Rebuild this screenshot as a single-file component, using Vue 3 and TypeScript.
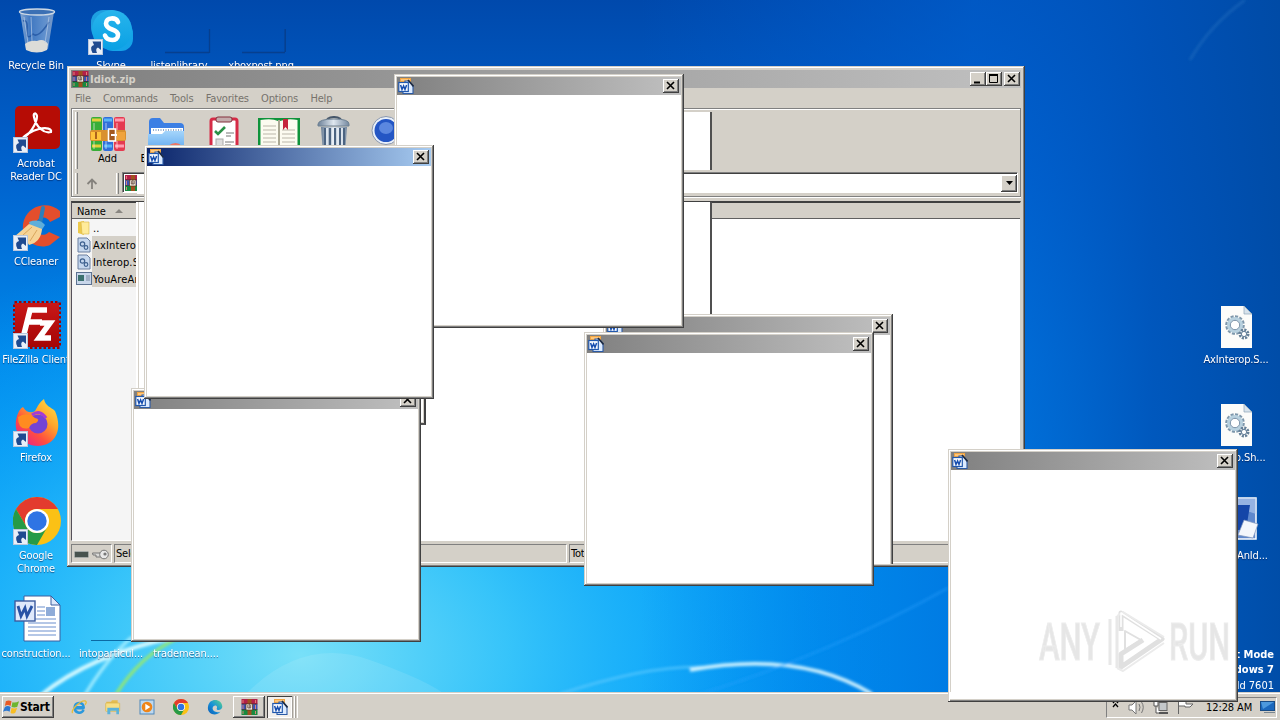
<script setup lang="ts">
interface DesktopItem { id: string; icon: string; label: string; x: number; y: number; shortcut?: boolean }
interface Popup { id: string; x: number; y: number; active?: boolean; cut?: boolean }

const items: DesktopItem[] = [
  { id: 'bin', icon: 'bin', label: 'Recycle Bin', x: -1, y: 7 },
  { id: 'skype', icon: 'skype', label: 'Skype', x: 74, y: 7, shortcut: true },
  { id: 'listen', icon: 'ghostwide', label: 'listenlibrary', x: 142, y: 7 },
  { id: 'xbox', icon: 'ghost', label: 'xboxpost.png', x: 224, y: 7 },
  { id: 'acrobat', icon: 'acrobat', label: 'Acrobat Reader DC', x: -1, y: 105, shortcut: true },
  { id: 'ccleaner', icon: 'ccleaner', label: 'CCleaner', x: -1, y: 203, shortcut: true },
  { id: 'filezilla', icon: 'filezilla', label: 'FileZilla Client', x: -1, y: 301, shortcut: true },
  { id: 'firefox', icon: 'firefox', label: 'Firefox', x: -1, y: 399, shortcut: true },
  { id: 'chrome', icon: 'chrome', label: 'Google Chrome', x: -1, y: 497, shortcut: true },
  { id: 'construction', icon: 'worddoc', label: 'construction...', x: -1, y: 595 },
  { id: 'into', icon: 'ghostline', label: 'intoparticul...', x: 74, y: 595 },
  { id: 'trade', icon: 'none', label: 'trademean....', x: 149, y: 595 },
  { id: 'axinterop', icon: 'dll', label: 'AxInterop.S...', x: 1199, y: 301 },
  { id: 'interop', icon: 'dll', label: 'Interop.Sh...', x: 1199, y: 399 },
  { id: 'idiot', icon: 'app', label: 'YouAreAnId...', x: 1199, y: 497 },
]

const menus = ['File', 'Commands', 'Tools', 'Favorites', 'Options', 'Help']

const tools = [
  { icon: 'books', label: 'Add', w: 57 },
  { icon: 'folder', label: 'Extract To', w: 58 },
  { icon: 'clip', label: 'Test', w: 57 },
  { icon: 'book', label: 'View', w: 53 },
  { icon: 'trash', label: 'Delete', w: 57 },
  { icon: 'disc', label: 'Find', w: 49 },
]

const files = [
  { icon: 'fold16', name: '..', sel: false },
  { icon: 'dll16', name: 'AxInterop.S', sel: true },
  { icon: 'dll16', name: 'Interop.Sh', sel: true },
  { icon: 'exe16', name: 'YouAreAnId', sel: true },
]

const popups: Popup[] = [
  { id: 'd', x: 603, y: 314, cut: true },
  { id: 'e', x: 584, y: 332 },
  { id: 'b', x: 394, y: 74 },
  { id: 'c', x: 131, y: 388 },
  { id: 'a', x: 144, y: 145, active: true },
  { id: 'f', x: 948, y: 449 },
]

const quick = ['ie', 'explorer', 'player', 'chrome', 'edge']
</script>

<template>
  <div class="desktop">
    <svg class="defs" width="0" height="0">
      <defs>
        <linearGradient id="gBin" x1="0" x2="1"><stop offset="0" stop-color="#9fb9d8" /><stop offset=".3" stop-color="#4a7fc4" /><stop offset=".7" stop-color="#6f9bd2" /><stop offset="1" stop-color="#8aa6cc" /></linearGradient>
        <linearGradient id="gSky" y1="0" y2="1" x2="0"><stop offset="0" stop-color="#28b4ec" /><stop offset="1" stop-color="#0aa0e4" /></linearGradient>
        <linearGradient id="gFx" x1="1" y1="0" x2=".2" y2="1"><stop offset="0" stop-color="#ffe94a" /><stop offset=".4" stop-color="#ffa62b" /><stop offset=".7" stop-color="#ff4f3e" /><stop offset="1" stop-color="#e8208a" /></linearGradient>
        <linearGradient id="gFold" y1="0" y2="1" x2="0"><stop offset="0" stop-color="#a5d5fb" /><stop offset="1" stop-color="#5aa5ee" /></linearGradient>
        <linearGradient id="gTrash" x1="0" x2="1"><stop offset="0" stop-color="#6d8199" /><stop offset=".5" stop-color="#dfe7ef" /><stop offset="1" stop-color="#7488a0" /></linearGradient>
        <linearGradient id="gFz" y1="0" y2="1" x2="0"><stop offset="0" stop-color="#c81818" /><stop offset="1" stop-color="#a50505" /></linearGradient>
        <linearGradient id="gEdge" x1="0" y1="1" x2="1" y2="0"><stop offset="0" stop-color="#0b5cb8" /><stop offset=".5" stop-color="#1793d8" /><stop offset="1" stop-color="#5fd68a" /></linearGradient>
      </defs>

      <symbol id="i-bin" viewBox="0 0 48 48">
        <path d="M7 5 L13 42 Q24 48 35 42 L41 5Z" fill="url(#gBin)" opacity=".85" />
        <path d="M12 37 Q17 33 24 34 Q31 31 35 37 L34 43 Q24 48 13 43Z" fill="#dcdcd8" />
        <path d="M10 14 Q15 12 14 23 T20 27 Q25 32 36 15" fill="none" stroke="#1b4f9c" stroke-width="1.5" opacity=".7" />
        <path d="M11 10 15 36M18 10 19 34M36 10 32 36" stroke="#b8cde8" stroke-width="1" opacity=".7" />
        <ellipse cx="24" cy="5" rx="17.5" ry="3" fill="#3c70b4" stroke="#ccd8e4" stroke-width="1.4" />
      </symbol>
      <symbol id="i-skype" viewBox="0 0 48 48">
        <rect x="3" y="3" width="32" height="30" rx="12" fill="#1e9fe0" />
        <rect x="13" y="14" width="32" height="30" rx="12" fill="#14a4e8" />
        <circle cx="24" cy="23" r="20" fill="url(#gSky)" />
        <path d="M30 15 C28 10 18 10 18 16.500 C18 24 30 21 30 28 C30 35 19 34 17 28.500" fill="none" stroke="#fff" stroke-width="4.6" stroke-linecap="round" />
      </symbol>
      <symbol id="i-acrobat" viewBox="0 0 48 48">
        <rect x="2" y="1" width="45" height="43" rx="5" fill="#b60c05" />
        <path d="M10 33 C16 30 24 19 24 11 C23 7 20 8 21 12 C23 22 31 29 38 27 C39 24 34 22 26 24 C18 26 11 31 10 33Z" fill="none" stroke="#fff" stroke-width="2.2" />
      </symbol>
      <symbol id="i-ccleaner" viewBox="0 0 48 48">
        <path d="M47 8 C36 -2 17 1 11 17 C5 35 23 48 37 42 L47 34 L36 29 C30 35 21 31 22 22 C24 13 34 12 37 19 L47 14Z" fill="#e44e2c" />
        <path d="M30 5 27 20" stroke="#2c7fba" stroke-width="4" stroke-linecap="round" />
        <path d="M16 19 Q26 15 32 22 L28 28 18 26Z" fill="#5eaedb" />
        <path d="M16 21 Q7 29 2 33 Q13 35 16 42 Q28 39 29 26Z" fill="#f6d396" />
        <path d="M10 32 19 24M17 38 24 27" stroke="#d9a65c" />
      </symbol>
      <symbol id="i-filezilla" viewBox="0 0 48 48">
        <rect x="1.5" y="1.5" width="45" height="45" fill="none" stroke="#a00000" stroke-width="3" stroke-dasharray="2.5 2" />
        <rect x="2" y="2" width="44" height="44" fill="url(#gFz)" />
        <path d="M11 33 17 9H34M14 21H29M27 22H37L26 37H38" fill="none" stroke="#fff" stroke-width="5.5" />
      </symbol>
      <symbol id="i-firefox" viewBox="0 0 48 48">
        <path d="M4 17 C6 11 8 9 10 8 C13 13 17 14 20 13 C24 12 23 6 31 0 C32 7 38 8 42 12 C51 33 40 47 25 47 C9 47 -1 32 4 17Z" fill="url(#gFx)" />
        <circle cx="25" cy="25" r="9.5" fill="#7443d4" />
        <path d="M5 18Q14 12 22 19Q28 20 23 24Q18 24 16 29Q5 32 5 18" fill="#ff8b20" />
        <path d="M19 16Q27 10 33 19" fill="none" stroke="#a53bd4" stroke-width="3" />
      </symbol>
      <symbol id="i-chrome" viewBox="0 0 48 48">
        <circle cx="24" cy="24" r="24" fill="#fbc115" />
        <path d="M24 0 A24 24 0 0 1 45 12 H24 A12 12 0 0 0 13.6 30 L3 12 A24 24 0 0 1 24 0Z" fill="#e33b2e" />
        <path d="M3 12 L13.6 30 A12 12 0 0 0 34.4 30 L24 48 A24 24 0 0 1 3 12Z" fill="#269a47" />
        <circle cx="24" cy="24" r="12" fill="#fff" /><circle cx="24" cy="24" r="9.7" fill="#2f74e4" />
      </symbol>
      <symbol id="i-worddoc" viewBox="0 0 48 48">
        <path d="M11 1H38L47 10V46H11Z" fill="#fff" stroke="#3d5f9e" stroke-width="1" /><path d="M38 1V10H47Z" fill="#dbe8fb" stroke="#3d5f9e" />
        <path d="M15 24H43M15 28H43M15 32H43M15 36H43M15 40H43M24 12H32M24 16H32M24 20H32" stroke="#6b8fcd" />
        <rect x="33" y="12" width="9" height="9" fill="#8facd8" />
        <rect x="2" y="6" width="20" height="20" fill="#dfe9fb" stroke="#3d5c9f" stroke-width="1.4" />
        <path d="M5 11 8 21 12 13 14 21 19 11" fill="none" stroke="#2852a5" stroke-width="2.8" />
      </symbol>
      <symbol id="i-ghost" viewBox="0 0 48 48"><path d="M4 45.5H47M47.2 22V45" fill="none" stroke="#063f8e" stroke-width="1.5" /></symbol>
      <symbol id="i-ghostwide" viewBox="0 0 48 48" overflow="visible"><path d="M9 45.5H53M53.5 22V46" fill="none" stroke="#063f8e" stroke-width="1.3" /></symbol>
      <symbol id="i-ghostline" viewBox="0 0 48 48"><path d="M3 45.5H48" stroke="#0b6aa4" stroke-width="1.2" /></symbol>
      <symbol id="i-dll" viewBox="0 0 48 48">
        <path d="M8 5H31L39 13V47H8Z" fill="#fcfcfa" /><path d="M31 5V13H39Z" fill="#d8e3ec" stroke="#8ea5b7" stroke-width=".7" />
        <circle cx="22" cy="24" r="7.5" fill="none" stroke="#7e97ab" stroke-width="4.6" stroke-dasharray="2.7 1.2" />
        <circle cx="22" cy="24" r="6.5" fill="none" stroke="#b8d1df" stroke-width="3" /><circle cx="22" cy="24" r="4.7" fill="#fff" stroke="#7790a8" />
        <circle cx="31" cy="33" r="4" fill="#fff" stroke="#647f97" stroke-width="3" stroke-dasharray="2 1.1" /><circle cx="31" cy="33" r="2.6" fill="#fff" stroke="#647f97" />
      </symbol>
      <symbol id="i-app" viewBox="0 0 48 48">
        <rect x="5" y="1" width="38" height="41" fill="#5f88cd" stroke="#fff" stroke-width="1.5" />
        <path d="M5 1H43V17Q24 8 5 22Z" fill="#b9cef0" opacity=".6" /><path d="M25 8H37L33 33H20Z" fill="#1546a8" />
        <path d="M31 23 45 27 40 41 25 38Z" fill="#f4f7fc" stroke="#8197bb" stroke-width=".7" />
      </symbol>
      <symbol id="i-arrow" viewBox="0 0 16 16">
        <rect x=".5" y=".5" width="14" height="15" fill="#e9eff8" stroke="#b9c7dd" /><path d="M4.500 14 Q1 7 6 6 L4.500 2.500 H13 V11 L10 8.500 Q7 9.500 9 14Z" fill="#1f4a90" />
      </symbol>

      <symbol id="i-rar" viewBox="0 0 16 16">
        <rect y="0" width="16" height="5" fill="#b3204a" /><rect y="5.3" width="16" height="5" fill="#3c50b4" /><rect y="10.7" width="16" height="5.3" fill="#178a3f" />
        <path d="M0 5.1H16M0 10.5H16" stroke="#211c2a" stroke-width=".7" />
        <path d="M1.500 1V4M1.500 6V10M1.500 12V15M14 1V4M14 6V10M14 12V15" stroke="#e88a7a" stroke-width=".9" />
        <rect x="6" width="4" height="16" fill="#a0501f" /><rect x="4.5" y="5" width="6.5" height="6" fill="#f4eee2" stroke="#59371f" stroke-width=".7" /><path d="M6.300 6V9H9.200V6M7.8 4V9" fill="none" stroke="#5d4035" stroke-width=".8" />
      </symbol>
      <symbol id="i-word" viewBox="0 0 16 16">
        <path d="M2 0H13V5H2Z" fill="#f2a541" /><path d="M3 1H12V3H3Z" fill="#ffc67a" />
        <path d="M7 3H11L15 7.500V15.500H5V12H7Z" fill="#dcebff" stroke="#2a5aa6" stroke-width="1.1" /><path d="M10 2 15.500 8.500" stroke="#1d2a40" stroke-width="1.6" />
        <rect x=".8" y="4.5" width="9.5" height="9" fill="#f8fbff" stroke="#2158ad" stroke-width="1.2" /><path d="M2.6 7 4 11.5 5.6 8 7 11.5 8.6 7" fill="none" stroke="#174eaf" stroke-width="1.5" />
      </symbol>

      <symbol id="i-books" viewBox="0 0 42 36">
        <rect x="3" y="1" width="11" height="34" rx="2" fill="#38ae38" /><rect x="15" y="1" width="10" height="34" rx="2" fill="#306fdb" /><rect x="26" y="1" width="11" height="34" rx="2" fill="#e53a50" />
        <path d="M4 4H13M4 30H13" stroke="#e4ce3a" stroke-width="3" /><path d="M16 4H24M16 30H24" stroke="#59b5f6" stroke-width="3" /><path d="M27 4H36M27 30H36" stroke="#ff9bb0" stroke-width="3" />
        <path d="M6 7V33M18 7V33M29 7V33" stroke="#fff" stroke-width="1.5" opacity=".4" />
        <rect x="2" y="14" width="36" height="11" rx="2" fill="#d9902e" /><path d="M3 16H13V24H3Z" fill="#ffc43c" /><path d="M29 16H37V24H29Z" fill="#f0a33c" />
        <rect x="20.5" y="13" width="7" height="12" fill="#a35a20" stroke="#fff" stroke-width="1.600" /><path d="M23 19H29" stroke="#fff" stroke-width="2" /><path d="M8 16V23" stroke="#ad631c" stroke-width="2" />
      </symbol>
      <symbol id="i-folder" viewBox="0 0 42 36">
        <path d="M4 34V6Q4 2 8 2H15L19 7H35Q39 7 39 11V34Z" fill="#3c7fe4" /><path d="M6 12H38V28H6Z" fill="#fff" /><path d="M8 14H37" stroke="#8eacd0" stroke-width="2" stroke-dasharray="1 1.5" />
        <path d="M3 18H17L20 15H39V36H3Z" fill="url(#gFold)" /><path d="M24 31Q31 26 36 31" stroke="#ee7564" stroke-width="3" />
      </symbol>
      <symbol id="i-clip" viewBox="0 0 42 36">
        <rect x="8" y="3" width="26" height="38" rx="2" fill="#fff" stroke="#d62b46" stroke-width="3" /><rect x="13" y="1" width="16" height="5" rx="2" fill="#c4acac" stroke="#84303c" />
        <path d="M12 15 15 18 22 11" fill="none" stroke="#2b9147" stroke-width="2.600" /><path d="M23 17H31M23 20H28M22 26H31M22 29H28" stroke="#777" /><rect x="13" y="23" width="7" height="7" fill="#ddd" stroke="#aaa" />
      </symbol>
      <symbol id="i-book" viewBox="0 0 42 36">
        <path d="M0 2H42V36H0Z" fill="#0f933b" /><path d="M2.500 4Q14 2 20 5V36H2.500ZM22 5Q30 2 39.500 4V36H22Z" fill="#fcfbf0" />
        <path d="M5 10H18M5 14H18M5 18H18M5 22H18M5 26H18M24 14H37M24 18H37M24 22H37M24 26H37" stroke="#bbb7aa" /><path d="M21 4V34" stroke="#aaa893" stroke-width="2" /><path d="M25 3H30V14L27.5 11 25 14Z" fill="#c5243c" />
      </symbol>
      <symbol id="i-trash" viewBox="0 0 42 36">
        <path d="M14 3Q21-1 28 3" fill="none" stroke="#47576a" stroke-width="2" /><path d="M5 8Q6 3 21 3T36 8V10H5Z" fill="url(#gTrash)" stroke="#6e8193" />
        <path d="M8 11H34L32 38H10Z" fill="url(#gTrash)" /><path d="M12 12V36M17 12V36M22 12V36M27 12V36M31 12V36" stroke="#4b6381" stroke-width="2" /><path d="M14 12V36M20 12V36M25 12V36M29 12V36" stroke="#eef4fa" stroke-width="1.5" />
      </symbol>
      <symbol id="i-disc" viewBox="0 0 42 36"><circle cx="20" cy="14.500" r="14" fill="#e9f0fa" stroke="#8a97ad" /><circle cx="20" cy="14.500" r="11.5" fill="#2456c4" /><ellipse cx="20" cy="12" rx="7" ry="6" fill="#5b87df" /></symbol>

      <symbol id="i-fold16" viewBox="0 0 16 16"><path d="M2 2 8 1V15L2 13Z" fill="#edc94b" /><path d="M5 2H13V14H6Z" fill="#ffeb9a" stroke="#d9b547" stroke-width=".6" /></symbol>
      <symbol id="i-dll16" viewBox="0 0 16 16"><path d="M2 1H11L14 4V15H2Z" fill="#c5d7ee" stroke="#6b7f9f" /><circle cx="6.5" cy="7" r="2.2" fill="none" stroke="#3e618f" stroke-width="1.2" /><circle cx="10" cy="10.5" r="1.8" fill="none" stroke="#3e618f" stroke-width="1.2" /></symbol>
      <symbol id="i-exe16" viewBox="0 0 16 16"><rect x=".5" y="1.5" width="15" height="12" fill="#c8d6ea" stroke="#5c7291" /><rect x="2" y="4" width="6" height="6" fill="#3c716e" /><path d="M10 5H14M10 7H14M10 9H14" stroke="#7888a0" /></symbol>

      <symbol id="i-ie" viewBox="0 0 48 48"><path d="M40 28H14M38 33C30 47 10 42 11 25C12 8 37 7 38 25H15" fill="none" stroke="#2b98dc" stroke-width="7.5" /><path d="M5 42C-3 34 30 2 43 6C48 8 45 14 42 17" fill="none" stroke="#e7bd3b" stroke-width="4" /></symbol>
      <symbol id="i-explorer" viewBox="0 0 48 48"><path d="M4 8H18L21 4H38V18H4Z" fill="#e5bd50" /><rect x="2" y="12" width="42" height="25" rx="2" fill="#f8df84" stroke="#d6b24c" stroke-width="2" /><path d="M7 26H42V46H34V35H16V46H7Z" fill="#5cb2da" /></symbol>
      <symbol id="i-player" viewBox="0 0 48 48"><rect x="3" y="3" width="42" height="42" fill="#bdd8ef" stroke="#4f88ba" stroke-width="3" /><circle cx="24" cy="24" r="16" fill="#ef8518" /><path d="M19 14 34 24 19 34Z" fill="#fff" /></symbol>
      <symbol id="i-edge" viewBox="0 0 48 48"><path d="M3 23C7-6 46-1 46 24C44 35 29 35 29 29C34 18 20 16 17 26C15 36 28 43 40 38C27 54-1 46 3 23Z" fill="url(#gEdge)" /></symbol>
      <symbol id="i-flag" viewBox="0 0 18 16"><path d="M3 2Q6 0 9 2L8 7Q5 5 2 7Z" fill="#e95a24" /><path d="M10 3Q13 4 17 2L15 8Q12 9 9 8Z" fill="#6db52e" /><path d="M2 8Q5 6 8 8L7 13Q4 11 0 13Z" fill="#2d78d0" /><path d="M9 9Q12 10 15 9L13 14Q10 16 8 14Z" fill="#f8bd22" /></symbol>
    </svg>

    <svg class="wall" viewBox="0 0 1280 720" preserveAspectRatio="none">
      <defs>
        <linearGradient id="w0" x1="0" y1="0" x2="0" y2="1"><stop offset="0" stop-color="#0049ac" /><stop offset=".25" stop-color="#0064cf" /><stop offset=".5" stop-color="#0088ea" /><stop offset=".75" stop-color="#009cf5" /><stop offset="1" stop-color="#009cf8" /></linearGradient>
        <radialGradient id="w1" gradientUnits="userSpaceOnUse" cx="300" cy="650" r="600" gradientTransform="translate(0 200) scale(1 .7)"><stop offset="0" stop-color="#78e0f8" /><stop offset=".35" stop-color="#3cc8fa" stop-opacity=".9" /><stop offset="1" stop-color="#00a0ff" stop-opacity="0" /></radialGradient>
        <linearGradient id="w2" x1="0" x2="1"><stop offset=".5" stop-color="#0060d8" stop-opacity="0" /><stop offset=".76" stop-color="#0062d4" stop-opacity=".6" /><stop offset=".9" stop-color="#0052b8" stop-opacity=".9" /><stop offset="1" stop-color="#004ba6" stop-opacity=".97" /></linearGradient>
        <filter id="blur"><feGaussianBlur stdDeviation="1.5" /></filter>
      </defs>
      <rect width="1280" height="720" fill="url(#w0)" /><rect width="1280" height="720" fill="url(#w1)" /><rect width="1280" height="720" fill="url(#w2)" />
      <path d="M240 700Q300 635 370 660T450 700Z" fill="#fff" opacity=".1" />
      <g fill="none" filter="url(#blur)">
        <path d="M40 696Q90 655 175 637" stroke="#d9fbff" stroke-width="4" /><path d="M82 700Q105 660 132 637" stroke="#a2edff" stroke-width="3" /><path d="M115 696Q140 655 180 637" stroke="#9beb66" stroke-width="3" />
        <path d="M560 694Q650 664 710 667" stroke="#58c8ff" stroke-width="2" /><path d="M690 670Q800 650 872 694" stroke="#d8f6ff" stroke-width="3.500" />
        <path d="M700 694Q830 654 948 588" stroke="#2ba4ff" stroke-width="1.500" opacity=".6" /><path d="M1190 60Q1210 25 1245 0" stroke="#3380c8" stroke-width="2" opacity=".5" />
      </g>
    </svg>

    <div v-for="it in items" :key="it.id" class="item" :style="{ left: it.x + 'px', top: it.y + 'px' }">
      <div class="pic">
        <svg width="48" height="48" overflow="visible"><use :href="'#i-' + it.icon" /></svg>
        <svg v-if="it.shortcut" class="short" width="16" height="16"><use href="#i-arrow" /></svg>
      </div>
      <span class="lab">{{ it.label }}</span>
    </div>

    <div class="build"><b>Test Mode</b><b>Windows 7</b><span>Build 7601</span></div>

    <section class="main">
      <header class="mtitle">
        <svg width="17" height="16"><use href="#i-rar" /></svg><b>Idiot.zip</b>
        <span class="grow"></span>
        <i class="btn"><svg width="12" height="12"><path d="M2 9.5H8" stroke="#000" stroke-width="2" /></svg></i>
        <i class="btn"><svg width="12" height="12"><path d="M1.500 2V9.500H9.500V2" fill="none" stroke="#000" /><path d="M1 2H10" stroke="#000" stroke-width="2" /></svg></i>
        <i class="btn last"><svg width="12" height="12"><path d="M2 2 9 9M9 2 2 9" stroke="#000" stroke-width="1.6" /></svg></i>
      </header>
      <nav class="menu"><span v-for="m in menus" :key="m">{{ m }}</span></nav>
      <div class="rebar">
        <div class="tools">
          <i class="grip"></i>
          <div v-for="t in tools" :key="t.label" class="tool" :style="{ width: t.w + 'px' }">
            <svg width="42" height="36"><use :href="'#i-' + t.icon" /></svg><span>{{ t.label }}</span>
          </div>
        </div>
        <div class="addr">
          <i class="grip"></i>
          <svg class="up" width="14" height="14"><path d="M7 12V3M2.500 7 7 2.500 11.500 7" fill="none" stroke="#85827d" stroke-width="1.8" /></svg>
          <i class="grip"></i>
          <div class="combo"><svg width="12" height="16" viewBox="0 0 12 16"><use href="#i-rar" width="16" height="16" /></svg><i class="btn drop"><svg width="9" height="6"><path d="M1 1H8L4.500 5Z" /></svg></i></div>
        </div>
      </div>
      <div class="list">
        <div class="head"><span>Name</span><svg width="8" height="4"><path d="M0 4 4 0 8 4Z" fill="#8a8782" /></svg></div>
        <div class="rows">
          <div v-for="f in files" :key="f.name" class="row" :class="{ sel: f.sel }"><svg width="16" height="16"><use :href="'#i-' + f.icon" /></svg><span>{{ f.name }}</span></div>
        </div>
      </div>
      <footer class="status">
        <div class="pane p1"><svg width="37" height="14"><rect x="2.500" y="4.500" width="14" height="6" rx="1" fill="#47524e" stroke="#a5aaa8" /><path d="M20.500 6H29V10H24V8H21Z" fill="#d9d9d7" stroke="#777" /><circle cx="32" cy="7.500" r="4.300" fill="#e8e8e8" stroke="#777" /><circle cx="33" cy="7" r="1.600" fill="#777" /></svg></div>
        <div class="pane p2">Selected 3 files</div>
        <div class="pane p3">Total 3 files</div>
      </footer>
    </section>

    <div class="ghost g1"></div>
    <div class="ghost g0"></div>
    <div class="ghost g2"></div>
    <div class="ghost g3"></div>

    <section v-for="p in popups" :key="p.id" class="popup" :class="{ cut: p.cut }" :style="{ left: p.x + 'px', top: p.y + 'px' }">
      <header class="ptitle" :class="{ active: p.active }">
        <svg width="16" height="16"><use href="#i-word" /></svg>
        <i class="btn"><svg width="12" height="12"><path d="M2 2 9 9M9 2 2 9" stroke="#000" stroke-width="1.6" /></svg></i>
      </header>
      <div class="pbody"></div>
    </section>

    <svg class="mark" width="210" height="76">
      <g fill="#e6e6e6" stroke="#ededed" stroke-width="1" font-family="Roboto, sans-serif" font-weight="500" font-size="52">
        <text x="6" y="57" textLength="61" lengthAdjust="spacingAndGlyphs">ANY</text><text x="136" y="57" textLength="61" lengthAdjust="spacingAndGlyphs">RUN</text>
      </g>
      <g fill="none" stroke="#e0e0e0" stroke-linejoin="round">
        <path d="M88 28V10L129 36 88 64V51L110 37" stroke-width="5" />
        <path d="M77 16V62M84 13V65" stroke-width="3" stroke="#e8e8e8" />
        <path d="M84 13 90 9 131 34M84 65 90 68 131 40" stroke="#ebebeb" stroke-width="2" />
        <path d="M92 28V47L108 37Z" stroke-width="2" />
        <path d="M88 24V10L128 36" stroke="#fff" stroke-width="1.500" />
      </g>
    </svg>

    <footer class="bar">
      <div class="start"><svg width="17" height="16"><use href="#i-flag" /></svg><b>Start</b></div>
      <div class="quick"><svg v-for="q in quick" :key="q" width="16" height="16"><use :href="'#i-' + q" /></svg></div>
      <div class="task"><svg width="17" height="16"><use href="#i-rar" /></svg></div>
      <div class="task on"><svg width="16" height="16"><use href="#i-word" /></svg></div>
      <i class="slim"></i><i class="slim"></i>
      <span class="grow"></span>
      <div class="tray">
        <svg width="90" height="18"><path d="M6 5 8.500 2 11 5M6 9 8.500 6 11 9" fill="none" stroke="#000" stroke-width="1.300" />
          <path d="M22 7H25L29 3V16L25 12H22Z" fill="#fff" stroke="#777" /><path d="M32 6Q34 9 32 13M34.500 4Q38 9 34.500 15" fill="none" stroke="#777" />
          <path d="M47 3H51V8H47ZM49 8V15H54" fill="#fff" stroke="#555" /><rect x="52" y="4.500" width="8" height="8" fill="#c3c7ca" stroke="#666" /><path d="M52 15H61" stroke="#555" stroke-width="2" />
          <path d="M71.500 16V3M72 3.500H79V6H86L83 9H78V8H72" fill="#fff" stroke="#666" /></svg>
        <span>12:28 AM</span>
        <svg class="show" width="16" height="16"><rect x=".5" y="2.500" width="14" height="9" fill="#1b68bd" stroke="#184c86" /><path d="M1 3H14L3 10Z" fill="#4d99dd" /><path d="M4 13.500H15" stroke="#7a8690" /></svg>
      </div>
    </footer>
    <div class="cover"></div>
  </div>
</template>

<style>
html, body { margin: 0; overflow: hidden; }
</style>

<style scoped>
* { box-sizing: border-box; }
i { font-style: normal; }
svg { display: block; flex: none; }
.desktop { position: relative; width: 1280px; height: 720px; overflow: hidden; font: 11px/13px "DejaVu Sans Condensed", "DejaVu Sans", "Noto Sans", sans-serif; letter-spacing: -.25px; color: #000; }
.defs { position: absolute; }
.wall { position: absolute; inset: 0; width: 1280px; height: 720px; }
.item { position: absolute; width: 76px; display: flex; flex-direction: column; align-items: center; }
.pic { position: relative; width: 48px; height: 48px; margin-bottom: 4px; }
.short { position: absolute; left: 0; bottom: 0; }
.lab { color: #fff; text-align: center; width: 75px; letter-spacing: -.12px; padding-right: 2px; display: flex; justify-content: center; text-shadow: 0 1px 1px rgba(0, 20, 70, .6); }
.build { position: absolute; right: 6px; top: 648px; display: flex; flex-direction: column; align-items: flex-end; gap: 1.5px; color: #fff; letter-spacing: 0; }
.build span { margin-top: 2px; }
.grow { flex: 1; }
.btn { width: 16px; height: 14px; flex: none; background: #d4d0c8; display: flex; justify-content: center; align-items: center; box-shadow: inset -1px -1px #404040, inset 1px 1px #fff, inset -2px -2px #808080; overflow: hidden; }
.main { position: absolute; left: 67px; top: 66px; width: 958px; height: 501px; padding: 4px; background: #d4d0c8; display: flex; flex-direction: column; box-shadow: inset -1px -1px #404040, inset 1px 1px #d4d0c8, inset -2px -2px #808080, inset 2px 2px #fff; }
.mtitle { height: 18px; flex: none; display: flex; align-items: center; padding: 0 1px; background: linear-gradient(90deg, #808080, #c0c0c0); color: #d4d0c8; }
.mtitle b { margin-left: 1px; letter-spacing: 0; }
.last { margin-left: 2px; }
.menu { height: 20px; flex: none; display: flex; align-items: center; gap: 12.3px; padding-left: 4px; color: #77736d; letter-spacing: -.17px; }
.rebar { height: 89px; flex: none; border: 1px solid #808080; box-shadow: inset 1px 1px #fff, 0 1px #fff; display: flex; flex-direction: column; padding: 2px; gap: 3px; }
.tools { height: 60px; display: flex; }
.grip { width: 3px; flex: none; border-left: 1px solid #fff; border-right: 1px solid #808080; margin: 1px 0 0 1px; }
.tools .grip { margin-right: 2px; }
.tool { display: flex; flex-direction: column; align-items: center; padding-top: 5px; flex: none; }
.tool span { white-space: nowrap; padding-right: 2px; letter-spacing: 0; line-height: 14px; }
.addr { height: 23px; display: flex; align-items: stretch; }
.up { margin: 5px 16px 0 7px; }
.combo { flex: 1; height: 21px; margin: 0 0 0 3px; background: #fff; border: 1px solid; border-color: #808080 #fff #fff #808080; box-shadow: inset 1px 1px #404040; display: flex; justify-content: space-between; padding: 2px 0 1px 2px; overflow: hidden; }
.drop { height: 17px; }
.list { flex: 1; margin: 4px 0 3px; border: 1px solid; border-color: #404040 #d4d0c8 #fff #55505a; border-top-width: 2px; background: linear-gradient(90deg, #f5f5f5 64px, #fff 64px); display: flex; flex-direction: column; }
.head { height: 16px; background: #d4d0c8; border-bottom: 1px solid #606060; display: flex; align-items: center; padding: 1px 0 0 5px; gap: 9px; letter-spacing: -.1px; }
.rows { width: 65px; overflow: hidden; display: flex; flex-direction: column; }
.row { height: 17px; display: flex; align-items: center; padding-left: 4px; white-space: nowrap; letter-spacing: .15px; }
.row span { height: 17px; line-height: 19px; padding-left: 1px; flex: 1; }
.row.sel span { background: #d4d0c8; }
.status { height: 19px; flex: none; display: flex; gap: 2px; }
.pane { border: 1px solid; border-color: #808080 #fff #fff #808080; padding: 2px 0 0 1px; overflow: hidden; white-space: nowrap; }
.p1 { width: 41px; padding-left: 0; }
.p2 { width: 453px; }
.p3 { flex: 1; }
.ghost { position: absolute; background: #fff; }
.g0 { left: 137px; top: 174px; width: 20px; height: 20px; }
.g1 { left: 136px; top: 202px; width: 290px; height: 223px; border-right: 2px solid #404040; border-bottom: 2px solid #505050; box-shadow: inset 2px 0 #fff, inset 3px 0 #d4d0c8, inset -1px -1px #d4d0c8; }
.g2 { left: 600px; top: 112px; width: 112px; height: 58px; border-right: 2px solid #505050; }
.g3 { left: 600px; top: 202px; width: 112px; height: 130px; border-right: 2px solid #505050; }
.popup { position: absolute; width: 290px; height: 254px; padding: 3px; background: #d4d0c8; display: flex; flex-direction: column; box-shadow: inset -1px -1px #404040, inset 1px 1px #d4d0c8, inset -2px -2px #808080, inset 2px 2px #fff; }
.popup.cut { clip-path: inset(0 0 4px 0); }
.ptitle { height: 18px; flex: none; display: flex; align-items: center; justify-content: space-between; padding: 0 2px 0 1px; background: linear-gradient(90deg, #808080, #c0c0c0); }
.ptitle.active { background: linear-gradient(90deg, #0a246a, #a6caf0); }
.pbody { flex: 1; background: #fff; }
.bar { position: absolute; left: 0; top: 692px; width: 1280px; height: 28px; background: #d4d0c8; box-shadow: inset 0 1px #d4d0c8, inset 0 2px #fff; display: flex; align-items: center; padding: 2px 2px 0; }
.start { width: 52px; height: 22px; display: flex; align-items: center; padding-left: 1px; box-shadow: inset -1px -1px #404040, inset 1px 1px #fff, inset -2px -2px #808080; }
.start b { font-size: 12px; letter-spacing: -.2px; }
.quick { display: flex; gap: 18px; margin: 0 10px 0 17px; }
.task { width: 32px; height: 22px; display: flex; align-items: center; justify-content: center; box-shadow: inset -1px -1px #404040, inset 1px 1px #fff, inset -2px -2px #808080; margin-right: 2px; }
.task.on { width: 25px; background: #f2f0ed; box-shadow: inset 1px 1px #404040, inset -1px -1px #fff; margin-right: 0; }
.slim { width: 3px; height: 22px; border-right: 1px solid #fff; border-left: 1px solid #a5a19b; }
.tray { width: 171px; height: 21px; border: 1px solid; border-color: #808080 #fff #fff #808080; display: flex; align-items: center; margin-right: 1px; }
.tray span { margin-left: 9px; white-space: nowrap; width: 48px; letter-spacing: -.1px; }
.show { margin-left: 6px; }
.mark { position: absolute; left: 1033px; top: 603px; }
.cover { position: absolute; left: 948px; top: 692px; width: 290px; height: 10px; background: #fff; border: solid #404040; border-width: 0 1px 1px 0; box-shadow: inset 1px 0 #d4d0c8, inset 2px 0 #fff, inset -1px -1px #808080, inset -2px -2px #d4d0c8; }
</style>
